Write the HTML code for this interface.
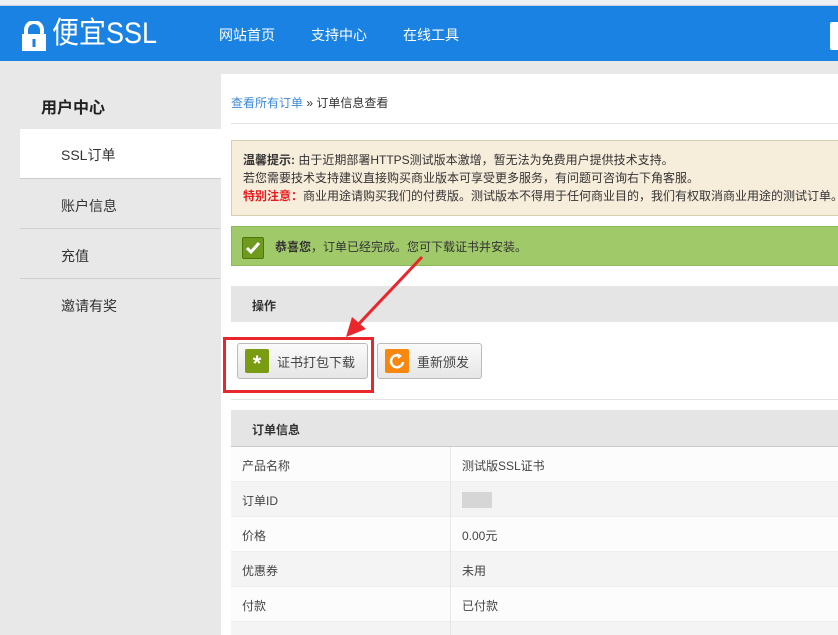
<!DOCTYPE html>
<html style="width:838px;height:635px;overflow:hidden"><head><meta charset="utf-8"><style>
*{margin:0;padding:0;box-sizing:border-box}
body{width:838px;height:635px;overflow:hidden;background:#e8e8e8;font-family:"Liberation Sans","Noto Sans CJK SC",sans-serif;font-size:13px;color:#333;position:relative}
.abs{position:absolute}
.tabs{left:0;top:0;width:838px;height:6px;background:#eef1f4;border-bottom:1px solid #c9d2dc}
.hdr{left:0;top:6px;width:838px;height:55px;background:#1a82e2;color:#fff}
.nav{top:26px;font-size:14px;color:#fff}
.side{font-size:14px;color:#333}
.sep{left:20px;width:200px;height:1px;background:#d0d0d0}
.main{left:221px;top:74px;width:617px;height:561px;background:#fff}
.row{left:231px;width:607px;height:35px;border-bottom:1px solid #eee}
.row span{position:absolute;top:10px;font-size:12px;color:#444}
</style></head><body>
<div class="abs tabs"></div>
<div class="abs hdr">
 <svg class="abs" style="left:22px;top:15px" width="24" height="30" viewBox="0 0 24 30"><path d="M4 13V9a8 8 0 0 1 16 0v4" stroke="#fff" stroke-width="4" fill="none"/><rect x="0" y="13" width="24" height="17" fill="#fff"/><rect x="10.5" y="18" width="3" height="8" fill="#1a82e2"/></svg>
 <div class="abs" style="left:52px;top:11px;font-size:30px;line-height:34px;color:#fff;transform:scaleX(0.9);transform-origin:0 0">便宜SSL</div>
 <div class="abs nav" style="left:219px;top:19px">网站首页</div>
 <div class="abs nav" style="left:311px;top:19px">支持中心</div>
 <div class="abs nav" style="left:403px;top:19px">在线工具</div>
 <div class="abs" style="left:830px;top:16px;width:10px;height:28px;background:#fff;border-radius:2px"></div>
</div>
<div class="abs side" style="left:41px;top:94px;font-size:16px;font-weight:bold;color:#222">用户中心</div>
<div class="abs" style="left:20px;top:129px;width:201px;height:50px;background:#fff;border-bottom:1px solid #ccc"></div>
<div class="abs side" style="left:61px;top:145px">SSL订单</div>
<div class="abs side" style="left:61px;top:196px">账户信息</div>
<div class="abs sep" style="top:228px"></div>
<div class="abs side" style="left:61px;top:246px">充值</div>
<div class="abs sep" style="top:278px"></div>
<div class="abs side" style="left:61px;top:296px">邀请有奖</div>
<div class="abs main"></div>
<div class="abs" style="left:231px;top:94px;font-size:12px;color:#333"><span style="color:#3b88d8">查看所有订单</span> » 订单信息查看</div>
<div class="abs" style="left:231px;top:123px;width:607px;height:1px;background:#e3e3e3"></div>
<div class="abs" style="left:231px;top:140px;width:620px;height:76px;background:#f7eddb;border:1px solid #d9ccb0;font-size:12px;line-height:18px;padding:10px 0 0 11px;color:#333;white-space:nowrap">
<b>温馨提示:</b> 由于近期部署HTTPS测试版本激增，暂无法为免费用户提供技术支持。<br>若您需要技术支持建议直接购买商业版本可享受更多服务，有问题可咨询右下角客服。<br><b style="color:#e8191c">特别注意：</b>商业用途请购买我们的付费版。测试版本不得用于任何商业目的，我们有权取消商业用途的测试订单。</div>
<div class="abs" style="left:231px;top:226px;width:620px;height:40px;background:#a0ca6a;border:1px solid #8fb85c"></div>
<div class="abs" style="left:242px;top:237px;width:22px;height:22px;background:#6e9a1e;border:1px solid #4f7410;border-radius:2px"><svg width="20" height="20"><path d="M4 10l4 4 8-9" stroke="#fff" stroke-width="3" fill="none"/></svg></div>
<div class="abs" style="left:275px;top:238px;font-size:12px;color:#333"><b>恭喜您</b>，订单已经完成。您可下载证书并安装。</div>
<div class="abs" style="left:231px;top:286px;width:607px;height:36px;background:#e5e5e5"></div>
<div class="abs" style="left:252px;top:297px;font-size:12px;font-weight:bold">操作</div>
<div class="abs" style="left:231px;top:322px;width:607px;height:78px;border-bottom:1px solid #e3e3e3"></div>
<div class="abs" style="left:237px;top:343px;width:131px;height:36px;background:linear-gradient(#fafafa,#e6e6e6);border:1px solid #bbb;border-radius:3px"></div>
<div class="abs" style="left:245px;top:349px;width:24px;height:24px;background:#7a9c12;border-radius:2px;color:#fff;font-size:22px;font-weight:bold;text-align:center;line-height:30px">*</div>
<div class="abs" style="left:277px;top:352px;font-size:13px;color:#444">证书打包下载</div>
<div class="abs" style="left:377px;top:343px;width:105px;height:36px;background:linear-gradient(#fafafa,#e6e6e6);border:1px solid #bbb;border-radius:3px"></div>
<div class="abs" style="left:385px;top:349px;width:24px;height:24px;background:#f7870f;border-radius:2px"><svg width="24" height="24"><path d="M15 7a6 6 0 1 0 3 6" stroke="#fff" stroke-width="2.5" fill="none"/><path d="M12 4l5 3-4 3z" fill="#fff"/></svg></div>
<div class="abs" style="left:417px;top:352px;font-size:13px;color:#444">重新颁发</div>
<div class="abs" style="left:223px;top:337px;width:151px;height:56px;border:3px solid #e8262b"></div>
<svg class="abs" style="left:340px;top:255px" width="90" height="90"><path d="M82 2L14 74" stroke="#e8262b" stroke-width="3"/><path d="M6 82L12 62 26 74z" fill="#e8262b"/></svg>
<div class="abs" style="left:231px;top:410px;width:607px;height:37px;background:#e5e5e5;border-bottom:1px solid #ccc"></div>
<div class="abs" style="left:252px;top:421px;font-size:12px;font-weight:bold">订单信息</div>
<div class="abs row" style="top:447px;background:#fcfcfc"><span style="left:11px">产品名称</span><span style="left:231px">测试版SSL证书</span></div>
<div class="abs row" style="top:482px;background:#f4f4f4"><span style="left:11px">订单ID</span><span style="left:231px;top:10px;width:30px;height:16px;background:#d6d6d6"></span></div>
<div class="abs row" style="top:517px;background:#fcfcfc"><span style="left:11px">价格</span><span style="left:231px">0.00元</span></div>
<div class="abs row" style="top:552px;background:#f4f4f4"><span style="left:11px">优惠券</span><span style="left:231px">未用</span></div>
<div class="abs row" style="top:587px;background:#fcfcfc"><span style="left:11px">付款</span><span style="left:231px">已付款</span></div>
<div class="abs row" style="top:622px;height:13px;background:#f4f4f4;border:0"></div>
<div class="abs" style="left:450px;top:447px;width:1px;height:188px;background:#e6e6e6"></div>
</body></html>
